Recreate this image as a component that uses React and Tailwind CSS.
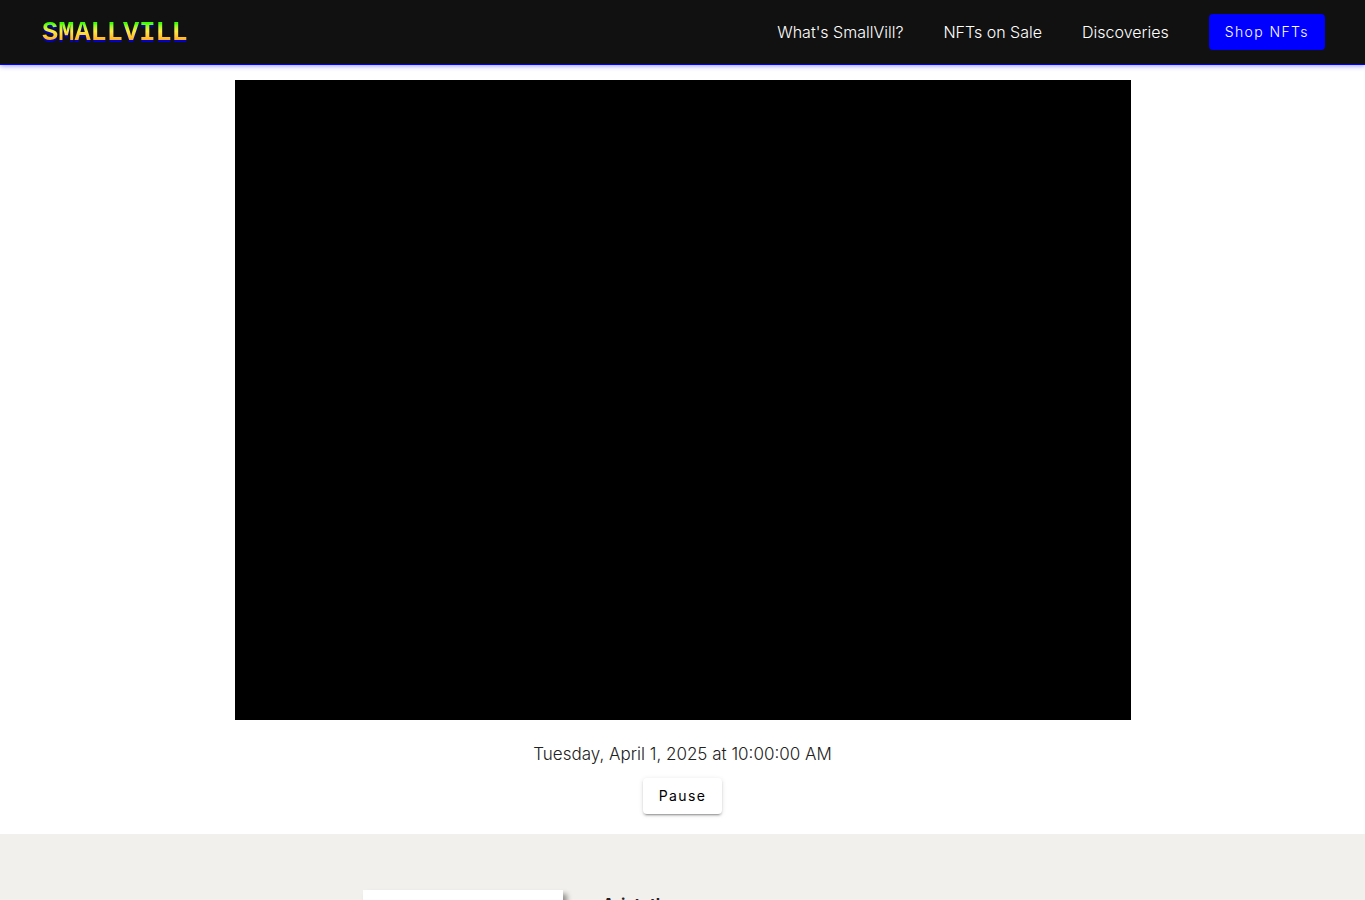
import React, { useState } from 'react';

const NAV_LINKS = [
  { label: "What's SmallVill?", href: '#about' },
  { label: 'NFTs on Sale', href: '#sale' },
  { label: 'Discoveries', href: '#discoveries' },
];

const RESIDENTS = [{ name: 'Aristotle' }];

const Header = () => (
  <header className="sticky top-0 z-10 flex h-16 items-center justify-between bg-[#111] px-10 shadow-[0_1px_0_#00f,0_2px_5px_rgba(0,0,255,0.4)]">
    <a href="#top" className="px-0.5 pt-0.5 drop-shadow-[0_2px_0_#00c]">
      <span className="block bg-linear-to-b from-[#3cff00] from-20% via-[#ffe93b] via-45% to-[#ff9d1e] to-80% bg-clip-text font-['Liberation_Mono',monospace] text-[27px] leading-8 font-bold text-transparent">
        SMALLVILL
      </span>
    </a>
    <nav className="flex items-center gap-10 text-white">
      {NAV_LINKS.map((link) => (
        <a key={link.href} href={link.href}>
          {link.label}
        </a>
      ))}
      <button type="button" className="h-9 rounded bg-[#00f] px-4 text-sm tracking-widest">
        Shop NFTs
      </button>
    </nav>
  </header>
);

const Village = () => {
  const [paused, setPaused] = useState(false);

  return (
    <main className="flex flex-col items-center px-4 pt-4 pb-5">
      <canvas width={896} height={640} className="max-w-full bg-black" />
      <p className="mt-5 text-[17px] leading-7">Tuesday, April 1, 2025 at 10:00:00 AM</p>
      <button
        type="button"
        onClick={() => setPaused(!paused)}
        className="mt-2.5 h-9 rounded bg-white px-4 text-sm font-normal tracking-widest text-black shadow-[0_3px_1px_-2px_rgba(0,0,0,0.2),0_2px_2px_rgba(0,0,0,0.14),0_1px_5px_rgba(0,0,0,0.12)]"
      >
        {paused ? 'Resume' : 'Pause'}
      </button>
    </main>
  );
};

const Residents = () => (
  <section className="bg-[#f1f0ec] px-4 py-14">
    {RESIDENTS.map((resident) => (
      <article key={resident.name} className="mx-auto flex max-w-[640px] gap-10">
        <div className="h-[200px] w-[200px] shrink-0 bg-white shadow-[4px_4px_5px_rgba(0,0,0,0.4)]" />
        <h2 className="font-bold leading-7">{resident.name}</h2>
      </article>
    ))}
  </section>
);

const App = () => (
  <div id="top" className="bg-white font-['Inter','Open_Sans',sans-serif] text-base font-light text-[#212121]">
    <Header />
    <Village />
    <Residents />
  </div>
);

export default App;
